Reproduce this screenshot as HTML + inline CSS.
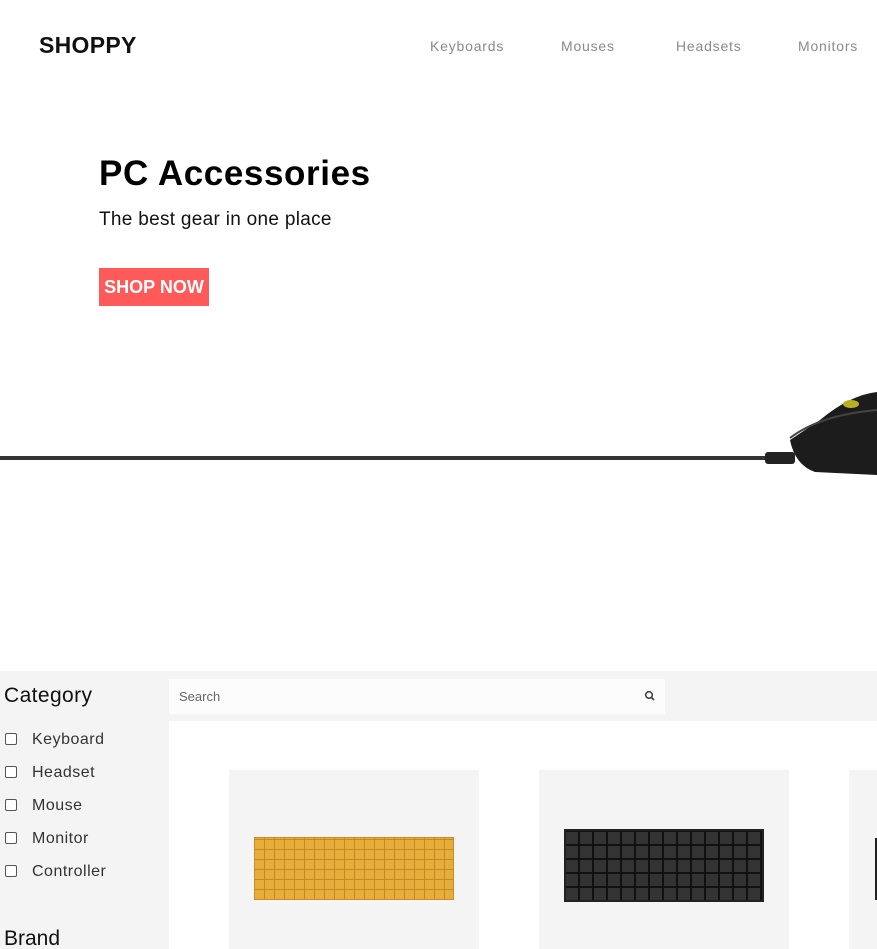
<!DOCTYPE html>
<html style="height:949px;overflow:hidden"><head><style>
*{margin:0;padding:0;box-sizing:border-box}
body{width:877px;height:949px;overflow:hidden;background:#fff;font-family:"Liberation Sans",sans-serif;position:relative}
.a{position:absolute}
.nav{color:#8a8a8a;font-size:14px;top:38px;letter-spacing:0.8px}
.cb{position:absolute;left:5px;width:12px;height:12px;border:1px solid #555;border-radius:2px;background:#fff}
.lbl{position:absolute;left:32px;font-size:16px;color:#333;letter-spacing:0.5px}
.card{position:absolute;top:770px;width:250px;height:179px;background:#f4f4f4}
</style></head><body>
<div class="a" style="left:39px;top:32px;font-size:23px;font-weight:bold;color:#111;letter-spacing:0.3px">SHOPPY</div>
<div class="a nav" style="left:430px">Keyboards</div>
<div class="a nav" style="left:561px">Mouses</div>
<div class="a nav" style="left:676px">Headsets</div>
<div class="a nav" style="left:798px">Monitors</div>
<div class="a" style="left:99px;top:154px;font-size:35px;font-weight:bold;color:#000;letter-spacing:0.6px">PC Accessories</div>
<div class="a" style="left:99px;top:209px;font-size:19px;color:#111;letter-spacing:0.3px">The best gear in one place</div>
<div class="a" style="left:99px;top:268px;width:110px;height:38px;background:#ff5a5a;color:#fff;font-weight:bold;font-size:18px;line-height:38px;text-align:center">SHOP NOW</div>
<svg class="a" style="left:0;top:380px" width="877" height="110">
<rect x="0" y="76" width="770" height="4" fill="#333"/>
<rect x="765" y="72" width="30" height="12" rx="3" fill="#222"/>
<path d="M790 60 L820 40 Q850 15 877 12 L877 95 L815 92 Q795 85 790 60Z" fill="#1c1c1c"/>
<path d="M790 58 Q820 35 877 30" stroke="#444" fill="none" stroke-width="2"/>
<ellipse cx="851" cy="24" rx="8" ry="4" fill="#b8b020"/>
</svg>
<div class="a" style="left:0;top:671px;width:877px;height:278px;background:#f4f4f4"></div>
<div class="a" style="left:169px;top:679px;width:496px;height:35px;background:#fcfcfc"></div>
<div class="a" style="left:179px;top:689px;font-size:13px;color:#666">Search</div>
<svg class="a" style="left:644px;top:690px" width="12" height="12"><circle cx="5" cy="5" r="3.3" stroke="#444" stroke-width="1.6" fill="none"/><path d="M7.5 7.5L10 10" stroke="#444" stroke-width="1.8"/></svg>
<div class="a" style="left:169px;top:721px;width:708px;height:228px;background:#fff"></div>
<div class="a" style="left:4px;top:684px;font-size:21px;color:#111;letter-spacing:0.4px">Category</div>
<div class="cb" style="top:733px"></div><div class="lbl" style="top:731px">Keyboard</div>
<div class="cb" style="top:766px"></div><div class="lbl" style="top:764px">Headset</div>
<div class="cb" style="top:799px"></div><div class="lbl" style="top:797px">Mouse</div>
<div class="cb" style="top:832px"></div><div class="lbl" style="top:830px">Monitor</div>
<div class="cb" style="top:865px"></div><div class="lbl" style="top:863px">Controller</div>
<div class="a" style="left:4px;top:927px;font-size:21px;color:#111">Brand</div>
<div class="card" style="left:229px"><div class="a" style="left:25px;top:67px;width:200px;height:63px;background:#e7ad3a;border:1px solid #c98d20;background-image:repeating-linear-gradient(90deg,transparent 0 9px,#c48a25 9px 10px),repeating-linear-gradient(0deg,transparent 0 9px,#c48a25 9px 10px)"></div></div>
<div class="card" style="left:539px"><div class="a" style="left:25px;top:59px;width:200px;height:73px;background:#333;border:2px solid #222;background-image:repeating-linear-gradient(90deg,transparent 0 12px,#111 12px 14px),repeating-linear-gradient(0deg,transparent 0 12px,#111 12px 14px)"></div></div>
<div class="card" style="left:849px"><div class="a" style="left:26px;top:68px;width:3px;height:62px;background:#222"></div></div>
</body></html>
